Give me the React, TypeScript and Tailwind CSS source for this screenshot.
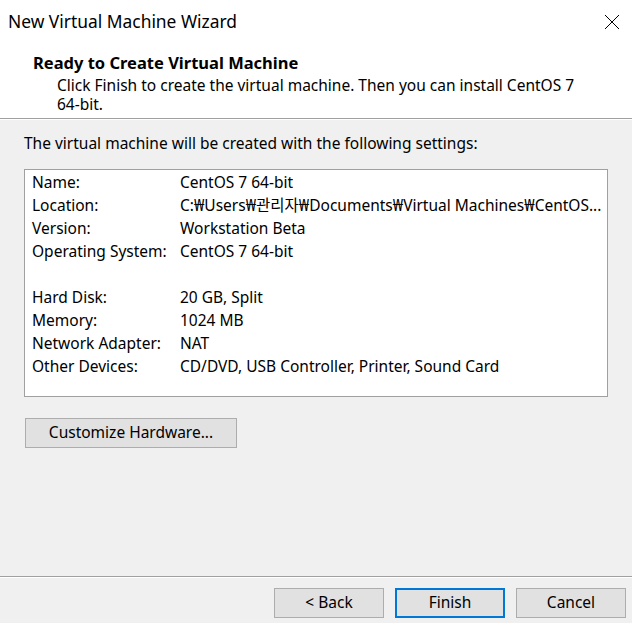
const rows: [string, string][] = [
  ["Name:", "CentOS 7 64-bit"],
  ["Location:", "C:\u20a9Users\u20a9관리자\u20a9Documents\u20a9Virtual Machines\u20a9CentOS..."],
  ["Version:", "Workstation Beta"],
  ["Operating System:", "CentOS 7 64-bit"],
  ["", ""],
  ["Hard Disk:", "20 GB, Split"],
  ["Memory:", "1024 MB"],
  ["Network Adapter:", "NAT"],
  ["Other Devices:", "CD/DVD, USB Controller, Printer, Sound Card"],
];

function Button({ label, primary, className }: { label: string; primary?: boolean; className?: string }) {
  return (
    <button
      className={
        "h-[30px] bg-[#e1e1e1] text-[15.5px] text-black " +
        (primary ? "border-2 border-[#0078d7] " : "border border-[#adadad] ") +
        (className ?? "")
      }
    >
      {label}
    </button>
  );
}

export default function App() {
  return (
    <div
      className="w-[632px] h-[623px] flex flex-col bg-[#f0f0f0] text-black overflow-hidden"
      style={{ fontFamily: '"Noto Sans", "Noto Sans CJK KR", sans-serif' }}
    >
      {/* title + header */}
      <div className="bg-white h-[118px] flex flex-col">
        <div className="h-[44px] flex items-center justify-between pl-[8px] pr-[12px]">
          <span className="text-[17.4px] leading-none">New Virtual Machine Wizard</span>
          <svg width="16" height="16" viewBox="0 0 16 16">
            <path d="M1 1 L15 15 M15 1 L1 15" stroke="#000" strokeWidth="1" />
          </svg>
        </div>
        <div className="pl-[33px] pr-[40px]">
          <div className="text-[16.5px] font-bold leading-[22px] mt-[8px]">Ready to Create Virtual Machine</div>
          <div className="pl-[24px] text-[15.5px] leading-[19px] mt-[2px]">
            Click Finish to create the virtual machine. Then you can install CentOS 7 64-bit.
          </div>
        </div>
      </div>
      <div className="h-px bg-[#a0a0a0]" />
      <div className="h-px bg-white" />

      {/* body */}
      <div className="flex-1 px-[24px] pt-[12px]">
        <div className="text-[15.5px] leading-[22px]">The virtual machine will be created with the following settings:</div>
        <div className="mt-[15px] h-[228px] bg-white border border-[#a0a0a0] pl-[7px] pt-[1px]">
          {rows.map(([k, v], i) => (
            <div key={i} className="flex h-[23px] items-center text-[15.5px] whitespace-nowrap">
              <span className="w-[148px] shrink-0">{k}</span>
              <span>{v}</span>
            </div>
          ))}
        </div>
        <Button label="Customize Hardware..." className="mt-[21px] w-[212px] ml-px" />
      </div>

      {/* footer */}
      <div className="h-px bg-[#a0a0a0]" />
      <div className="h-px bg-white" />
      <div className="h-[45px] flex items-start justify-end gap-[11px] pr-[6px] pt-[10px]">
        <Button label="< Back" className="w-[110px]" />
        <Button label="Finish" primary className="w-[110px]" />
        <Button label="Cancel" className="w-[110px]" />
      </div>
    </div>
  );
}
